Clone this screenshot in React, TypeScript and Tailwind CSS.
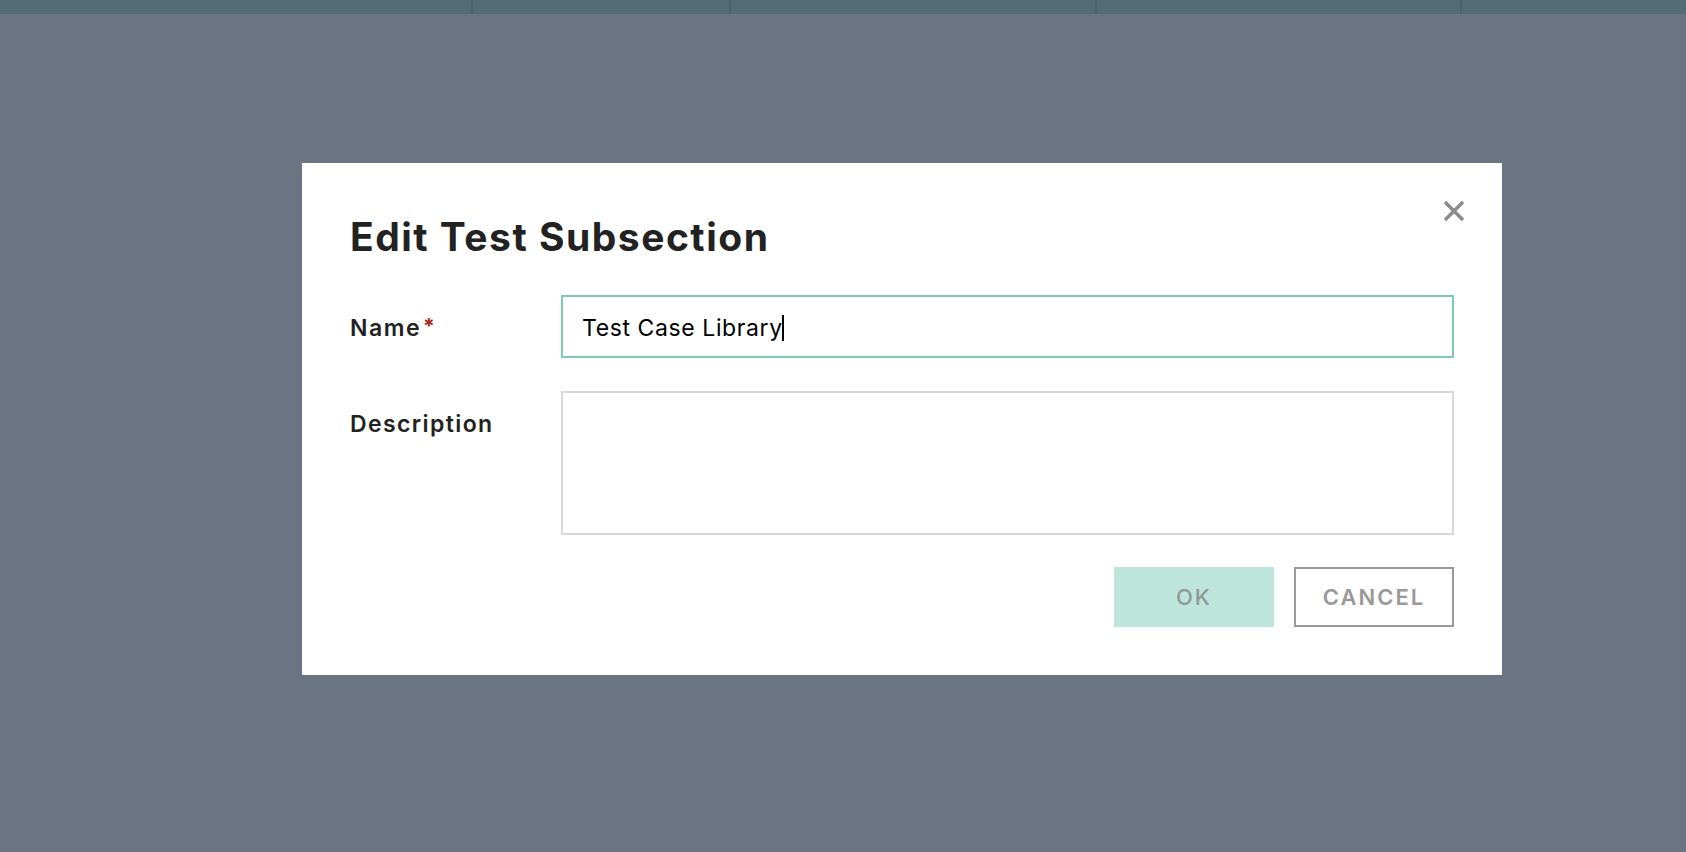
import React from "react";

const font = { fontFamily: "Inter, 'Noto Sans', Arial, sans-serif" };

export default function App() {
  return (
    <div className="w-[1686px] h-[852px] bg-[#6b7482] flex flex-col overflow-hidden" style={font}>
      <div className="h-[14px] bg-[#536c78] flex shrink-0">
        <div className="w-[473px] border-r-2 border-[#4c636e]" />
        <div className="w-[258px] border-r-2 border-[#4c636e]" />
        <div className="w-[366px] border-r-2 border-[#4c636e]" />
        <div className="w-[365px] border-r-2 border-[#4c636e]" />
        <div className="flex-1" />
      </div>
      <div className="pl-[302px] pt-[149px]">
        <div className="relative w-[1200px] h-[512px] bg-white pr-[48px] pl-[48px] pt-[55px] pb-[48px] flex flex-col">
          <button className="absolute right-[37px] top-[36px] w-[22px] h-[24px] flex items-center justify-center">
            <svg width="22" height="22" viewBox="0 0 22 22">
              <path d="M2 2 L20 20 M20 2 L2 20" stroke="#8c8c8c" strokeWidth="3.6" strokeLinecap="butt" />
            </svg>
          </button>
          <h1 className="text-[39px] leading-[38px] font-bold text-[#222222] tracking-[1.5px]">
            Edit Test Subsection
          </h1>
          <div className="mt-[39px] flex items-start">
            <div className="w-[211px] pt-[22px] text-[23px] leading-[23px] font-semibold text-[#222222] tracking-[1.5px] flex items-start">
              Name<span className="text-[#a8261c] text-[21px] leading-[21px] ml-[2px] -mt-[1px] font-bold">*</span>
            </div>
            <div className="flex-1 h-[63px] border-2 border-[#7dcab5] flex items-center pl-[19px]">
              <span className="text-[23px] text-black tracking-[0.6px] leading-[28px] mt-[2px]">Test Case Library</span>
              <span className="w-[2px] h-[26px] bg-black ml-[-1px] mt-[2px]" />
            </div>
          </div>
          <div className="mt-[33px] flex items-start">
            <div className="w-[211px] pt-[22px] text-[23px] leading-[23px] font-semibold text-[#222222] tracking-[1.4px]">
              Description
            </div>
            <div className="flex-1 h-[144px] border-2 border-[#d8d8d8]" />
          </div>
          <div className="mt-[32px] flex justify-end gap-[20px]">
            <button className="w-[160px] h-[60px] bg-[#bde5dc] text-[#8f9895] text-[22px] tracking-[2px] font-medium flex items-center justify-center">
              OK
            </button>
            <button className="w-[160px] h-[60px] border-2 border-[#9a9a9a] text-[#999999] text-[22px] tracking-[2px] font-semibold flex items-center justify-center">
              CANCEL
            </button>
          </div>
        </div>
      </div>
    </div>
  );
}
